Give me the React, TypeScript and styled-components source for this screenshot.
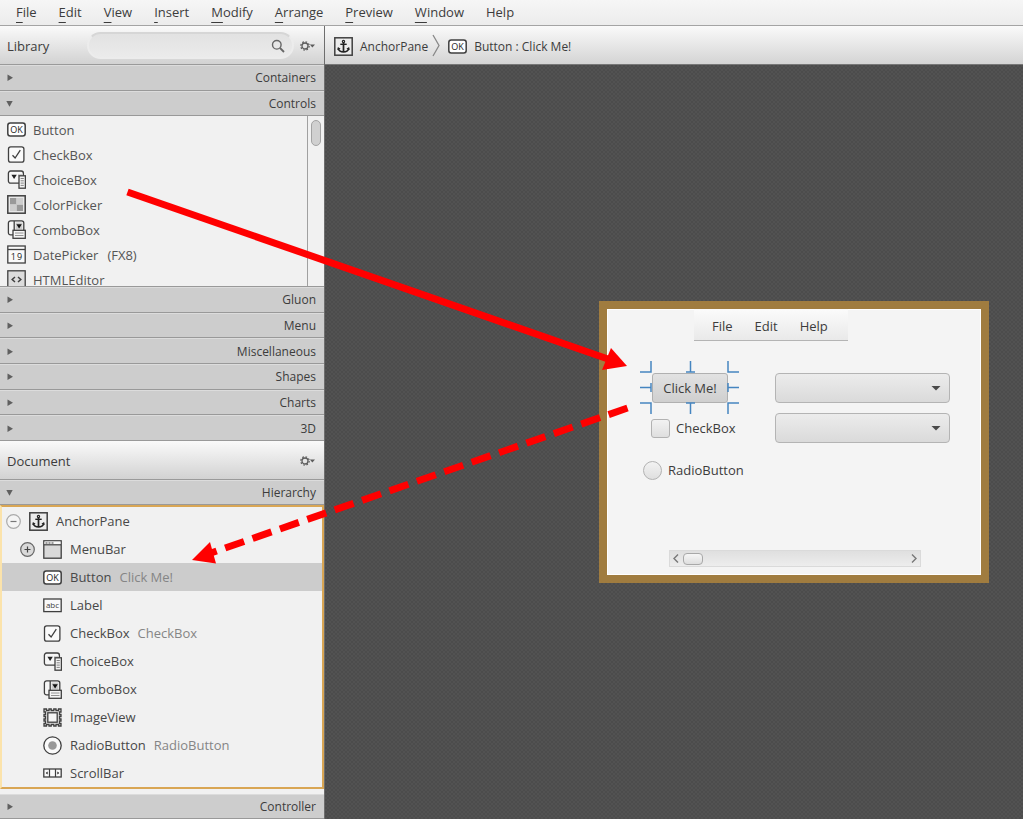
import React from "react";
import styled, { createGlobalStyle } from "styled-components";

const GlobalStyle = createGlobalStyle`
  *, *::before, *::after { box-sizing: border-box; }
  body { margin: 0; }
  body, button, input, select {
    font-family: "Open Sans", "Noto Sans", sans-serif;
    font-size: 13px;
    color: #3c3c3c;
  }
  button { border: 0; padding: 0; background: none; }
  ul { list-style: none; margin: 0; padding: 0; }
`;

const Shell = styled.div`
  position: relative;
  display: flex;
  flex-direction: column;
  min-height: 100vh;
  overflow: hidden;
`;

const MenuBar = styled.nav`
  display: flex;
  align-items: center;
  gap: 22px;
  height: 26px;
  padding: 0 0 2px 16px;
  background: linear-gradient(#f6f6f6, #ececec);
  border-bottom: 1px solid #a4a4a4;
`;

const MenuButton = styled.button`
  line-height: 22px;
`;

const Mnemonic = styled.span`
  text-decoration: underline;
  text-underline-offset: 5px;
  text-decoration-thickness: 1px;
  text-decoration-skip-ink: none;
`;

const Workspace = styled.div`
  flex: 1;
  display: flex;
`;

const Sidebar = styled.aside`
  flex: none;
  width: 325px;
  display: flex;
  flex-direction: column;
  background: #f1f1f1;
  border-right: 1px solid #6e6e6e;
`;

const PanelHeader = styled.header`
  display: flex;
  align-items: center;
  flex: none;
  height: 39px;
  padding: 1px 9px 0 7px;
  background: linear-gradient(#fafafa, #d2d2d2);
  border-bottom: 1px solid #9a9a9a;
`;

const PanelTitle = styled.h2`
  flex: 1;
  margin: 0;
  padding-top: 1px;
  font-size: 13px;
  font-weight: 400;
`;

const SearchBox = styled.label`
  display: flex;
  align-items: center;
  width: 207px;
  height: 27px;
  margin-right: 6px;
  padding: 0 7px 0 12px;
  border: 2px solid #ececec;
  border-top-color: #d6d6d6;
  border-radius: 14px;
  background: linear-gradient(#e2e2e2, #ebebeb);
`;

const SearchInput = styled.input`
  flex: 1;
  min-width: 0;
  border: 0;
  outline: 0;
  background: transparent;
`;

const Accordion = styled.div<{ $height: number }>`
  display: flex;
  flex-direction: column;
  flex: none;
  height: ${(p) => p.$height}px;
`;

const SectionHeader = styled.button`
  flex: 1;
  display: flex;
  align-items: center;
  justify-content: space-between;
  width: 100%;
  min-height: 0;
  padding: 1px 8px 0 6px;
  font-size: 12px;
  line-height: 16px;
  background: #cdcdcd;
  border-top: 1px solid #dcdcdc;
  border-bottom: 1px solid #999;
`;

const ListArea = styled.div`
  display: flex;
  flex: none;
  height: 171px;
  overflow: hidden;
  border-bottom: 1px solid #999;
`;

const ControlList = styled.ul`
  flex: 1;
  padding-top: 1px;
`;

const ControlItem = styled.li`
  display: flex;
  align-items: center;
  gap: 7px;
  height: 25px;
  padding-left: 7px;
  color: #555;
`;

const Note = styled.span`
  margin-left: 2px;
`;

const ScrollTrack = styled.div`
  width: 17px;
  padding: 4px 3px;
  border-left: 1px solid #a0a0a0;
`;

const ScrollThumb = styled.div`
  width: 10px;
  height: 26px;
  border: 1px solid #a3a3a3;
  border-radius: 5px;
  background: #d0d0d0;
`;

const Tree = styled.ul`
  flex: 1;
  border: 2px solid #d9a654;
  border-left-color: #fbe3ab;
`;

const TreeRow = styled.li<{ $level: number; $selected?: boolean }>`
  display: flex;
  align-items: center;
  height: 28px;
  padding-left: ${(p) => 4 + p.$level * 14}px;
  background: ${(p) => (p.$selected ? "#cccccc" : "transparent")};
  color: #484848;
`;

const Toggle = styled.button`
  display: flex;
  width: 15px;
  height: 15px;
`;

const ToggleSlot = styled.span`
  display: flex;
  width: 23px;
`;

const IconSlot = styled.span`
  display: flex;
  width: 27px;
`;

const Detail = styled.span`
  margin-left: 8px;
  color: #858585;
`;

const SidebarFoot = styled.footer`
  display: flex;
  height: 30px;
  padding-top: 5px;
`;

const Main = styled.main`
  flex: 1;
  min-width: 0;
  display: flex;
  flex-direction: column;
`;

const Breadcrumb = styled.nav`
  display: flex;
  align-items: center;
  height: 39px;
  padding: 2px 0 0 9px;
  background: linear-gradient(#fafafa, #d4d4d4);
  border-bottom: 1px solid #777;
`;

const Crumb = styled.button`
  display: flex;
  align-items: center;
  gap: 7px;
  font-size: 12px;
`;

const Canvas = styled.section`
  position: relative;
  flex: 1;
  overflow: hidden;
  background: repeating-conic-gradient(#4c4c4c 0 25%, #525252 0 50%) 0 0 / 4px 4px;
`;

const Artboard = styled.div`
  position: absolute;
  left: 274px;
  top: 236px;
  width: 390px;
  height: 282px;
  border: 8px solid #a07c3f;
  background: #f4f4f4;
  box-shadow: inset 0 0 0 1px #fff;
`;

const Placed = styled.div<{ $x: number; $y: number }>`
  position: absolute;
  left: ${(p) => p.$x}px;
  top: ${(p) => p.$y}px;
`;

const FormMenu = styled.div`
  display: flex;
  align-items: center;
  gap: 22px;
  width: 154px;
  height: 32px;
  padding: 3px 0 0 18px;
  background: linear-gradient(#fbfbfb, #e9e9e9);
  border-bottom: 1px solid #b4b4b4;
`;

const FormButton = styled.button`
  width: 76px;
  height: 30px;
  border: 1px solid #b0b0b0;
  border-radius: 3px;
  background: linear-gradient(#e2e2e2, #cfcfcf);
`;

const FormSelect = styled.select`
  appearance: none;
  display: block;
  width: 175px;
  height: 30px;
  border: 1px solid #b4b4b4;
  border-radius: 4px;
  background: linear-gradient(#ececec, #dadada);
`;

const SelectArrow = styled.svg`
  position: absolute;
  right: 9px;
  top: 12px;
  pointer-events: none;
`;

const FormLabel = styled.label`
  display: flex;
  align-items: center;
  gap: 6px;
  height: 20px;
`;

const FormTick = styled.input<{ $round?: boolean }>`
  appearance: none;
  width: 19px;
  height: 19px;
  margin: 0;
  border: 1px solid #b2b2b2;
  border-radius: ${(p) => (p.$round ? "50%" : "3px")};
  background: linear-gradient(#f2f2f2, #dfdfdf);
`;

const FormScroll = styled.div`
  display: flex;
  align-items: center;
  width: 252px;
  height: 17px;
  padding: 0 3px;
  border: 1px solid #dadada;
  background: linear-gradient(#dfdfdf, #ededed);
`;

const FormThumb = styled.div`
  width: 20px;
  height: 12px;
  margin: 0 auto 0 4px;
  border: 1px solid #a8a8a8;
  border-radius: 4px;
  background: linear-gradient(#f6f6f6, #dedede);
`;

const ArrowButton = styled.button`
  display: flex;
`;

const Annotations = styled.svg`
  position: absolute;
  left: 0;
  top: 0;
  pointer-events: none;
`;

type Kind =
  | "button" | "check" | "choice" | "color" | "combo" | "date" | "html"
  | "anchor" | "menubar" | "label" | "image" | "radio" | "scroll";

const ink = "#3f3f3f";

const drawings: Record<Kind, React.ReactNode> = {
  button: (
    <>
      <rect x=".8" y="3" width="17.4" height="13" rx="2.5" fill="#fff" />
      <text x="9.5" y="12.8" fontSize="9" textAnchor="middle" fill="#222" stroke="none">OK</text>
    </>
  ),
  check: (
    <>
      <rect x="1.5" y="1.8" width="15.4" height="15.4" rx="2.2" fill="#fafafa" strokeWidth="1.3" />
      <path d="M5.5 10.2l2.6 2.8 5.2-7.8" strokeWidth="1.3" />
    </>
  ),
  choice: (
    <>
      <rect x="1.4" y="1" width="15" height="12.2" rx="2.2" fill="#f7f7f7" strokeWidth="1.3" />
      <path d="M4.4 4.8h5.4L7.1 9z" fill="#222" stroke="none" />
      <path d="M11 5h4" stroke="#aaa" strokeWidth="1" />
      <rect x="12" y="5.8" width="6.4" height="12.4" fill="#f3f3f3" strokeWidth="1.3" />
      <path d="M13.6 8.5h3.2M13.6 10.8h3.2M13.6 13.1h3.2M13.6 15.4h3.2" stroke="#777" strokeWidth=".9" />
    </>
  ),
  color: (
    <>
      <rect x=".8" y=".8" width="17.4" height="17.4" fill="#e8e8e8" />
      <path d="M3 3h6.5v6.5H3zM9.5 9.5H16V16H9.500z" fill="#999" stroke="none" />
      <path d="M9.5 3H16v6.5H9.500zM3 9.5h6.5V16H3z" fill="#cdcdcd" stroke="none" />
    </>
  ),
  combo: (
    <>
      <rect x="1.4" y=".9" width="15.4" height="14" rx="2.2" fill="#f7f7f7" strokeWidth="1.3" />
      <path d="M7.2 1v13" strokeWidth="1.3" />
      <path d="M8.6 2.5h6.8v7H8.600z" fill="#ccc" stroke="none" />
      <path d="M9.400 4.300h5.400L12.100 8.500z" fill="#111" stroke="none" />
      <rect x="6" y="10.300" width="12.300" height="8" fill="#f6f6f6" strokeWidth="1.300" />
      <path d="M8 13h8.500M8 15.500h8.500" stroke="#888" strokeWidth=".9" />
    </>
  ),
  date: (
    <>
      <rect x=".8" y="1" width="17.4" height="17" fill="#fafafa" strokeWidth="1.3" />
      <path d="M1 4.500h17" strokeWidth="1.3" />
      <text x="6.300" y="14.500" fontSize="9" textAnchor="middle" fill="#222" stroke="none">1</text>
      <text x="12.500" y="14.500" fontSize="9" textAnchor="middle" fill="#222" stroke="none">9</text>
    </>
  ),
  html: (
    <>
      <rect x=".8" y=".8" width="17.4" height="17.4" fill="#dcdcdc" strokeWidth="1.3" />
      <path d="M8 7L5.200 9.500 8 12M11 7l2.800 2.500L11 12" />
    </>
  ),
  anchor: (
    <>
      <rect x=".8" y=".8" width="17.4" height="17.4" fill="#ececec" />
      <circle cx="9.5" cy="4.500" r="1.100" strokeWidth="1.200" stroke="#222" />
      <path d="M9.500 5.500V15" strokeWidth="1.700" stroke="#222" />
      <path d="M6.300 7.300h6.400" strokeWidth="1.400" stroke="#222" />
      <path d="M4.200 11.500c.8 2.500 2.800 3.400 5.300 3.400s4.500-.9 5.300-3.400" strokeWidth="1.600" stroke="#222" />
      <path d="M3.300 13l.6-3 2.700 1.800zM15.700 13l-.6-3-2.700 1.800z" fill="#222" stroke="none" />
    </>
  ),
  menubar: (
    <>
      <rect x=".8" y=".8" width="17.4" height="17.4" fill="#d9d9d9" strokeWidth="1.3" />
      <path d="M1.500 1.500h16v3h-16z" fill="#f8f8f8" stroke="none" />
      <path d="M1 4.800h17" strokeWidth="1.200" />
      <path d="M2.500 3h8" strokeWidth="1" strokeDasharray="2 1" />
    </>
  ),
  label: (
    <>
      <rect x=".8" y="3" width="17.4" height="12.600" fill="#fafafa" strokeWidth="1.3" />
      <text x="9.500" y="12" fontSize="8" textAnchor="middle" fill={ink} stroke="none">abc</text>
    </>
  ),
  image: (
    <>
      <path
        d="M1 1h2.500v1.500H6V1h2.200v1.500h2.600V1H13v1.500h2.500V1H18v3h-1.500v2.500H18v2h-1.500V11H18v2h-1.500v2.500H18V18h-2.500v-1.500H13V18h-2.200v-1.500H8.200V18H6v-1.500H3.500V18H1v-2.500h1.500V13H1v-2h1.500V8.500H1v-2h1.500V4H1z"
        fill="#e2e2e2"
        strokeWidth="1.3"
      />
      <rect x="4.800" y="4.800" width="9.400" height="9.400" fill="#f4f4f4" strokeWidth="1.3" />
    </>
  ),
  radio: (
    <>
      <circle cx="9.500" cy="9.500" r="8.700" fill="#fafafa" strokeWidth="1.3" />
      <circle cx="9.500" cy="9.500" r="4.300" fill="#999" stroke="none" />
    </>
  ),
  scroll: (
    <>
      <rect x=".8" y="5" width="17.4" height="8" fill="#fafafa" strokeWidth="1.3" />
      <path d="M6.500 5v8M12.500 5v8" strokeWidth="1.2" />
      <path d="M4.600 7.500v3L2.800 9zM14.400 7.500v3L16.200 9z" fill="#111" stroke="none" />
    </>
  ),
};

const Icon = ({ kind }: { kind: Kind }) => (
  <svg width="19" height="19" viewBox="0 0 19 19" fill="none" stroke={ink} strokeWidth="1.5" aria-hidden="true">
    {drawings[kind]}
  </svg>
);

const SearchIcon = () => (
  <svg width="14" height="14" viewBox="0 0 14 14" fill="none" stroke="#666" strokeWidth="1.4" aria-hidden="true">
    <circle cx="5.8" cy="5.8" r="4.3" />
    <path d="M9 9l4 4" strokeWidth="1.8" />
  </svg>
);

const GearButton = ({ label }: { label: string }) => (
  <ArrowButton aria-label={label}>
    <svg width="15" height="12" viewBox="0 0 15 12" aria-hidden="true">
      <circle cx="5" cy="6" r="3" fill="none" stroke="#5c5c5c" strokeWidth="1.3" />
      <circle cx="5" cy="6" r="4.2" fill="none" stroke="#5c5c5c" strokeWidth="1.2" strokeDasharray="1.65 1.65" />
      <path d="M9.800 4.500H15L12.400 7.500z" fill="#5c5c5c" />
    </svg>
  </ArrowButton>
);

const Section = ({ name, open }: { name: string; open?: boolean }) => (
  <SectionHeader aria-expanded={!!open}>
    <svg width="8" height="8" viewBox="0 0 8 8" fill="#606060" aria-hidden="true">
      <path d={open ? "M.3 1h6.400L3.500 6.800z" : "M1.500 .5v6.400L7 3.700z"} />
    </svg>
    {name}
  </SectionHeader>
);

const menus = ["File", "Edit", "View", "Insert", "Modify", "Arrange", "Preview", "Window", "Help"];

const controls: { kind: Kind; name: string; note?: string }[] = [
  { kind: "button", name: "Button" },
  { kind: "check", name: "CheckBox" },
  { kind: "choice", name: "ChoiceBox" },
  { kind: "color", name: "ColorPicker" },
  { kind: "combo", name: "ComboBox" },
  { kind: "date", name: "DatePicker", note: "(FX8)" },
  { kind: "html", name: "HTMLEditor" },
];

const nodes: { kind: Kind; name: string; detail?: string; toggle?: "minus" | "plus" }[] = [
  { kind: "anchor", name: "AnchorPane", toggle: "minus" },
  { kind: "menubar", name: "MenuBar", toggle: "plus" },
  { kind: "button", name: "Button", detail: "Click Me!" },
  { kind: "label", name: "Label" },
  { kind: "check", name: "CheckBox", detail: "CheckBox" },
  { kind: "choice", name: "ChoiceBox" },
  { kind: "combo", name: "ComboBox" },
  { kind: "image", name: "ImageView" },
  { kind: "radio", name: "RadioButton", detail: "RadioButton" },
  { kind: "scroll", name: "ScrollBar" },
];

const TreeToggle = ({ type }: { type: "minus" | "plus" }) => {
  const plus = type === "plus";
  return (
    <Toggle aria-label={plus ? "Expand" : "Collapse"}>
      <svg width="15" height="15" viewBox="0 0 15 15" fill="none" stroke={plus ? "#666" : "#aaa"} aria-hidden="true">
        <circle cx="7.5" cy="7.5" r="6.8" fill={plus ? "#d9d9d9" : "#f4f4f4"} strokeWidth="1.2" />
        <path d={plus ? "M4.5 7.500h6M7.500 4.500v6" : "M4.500 7.500h6"} stroke={plus ? "#444" : "#777"} strokeWidth="1.2" />
      </svg>
    </Toggle>
  );
};

const Dropdown = ({ label }: { label: string }) => (
  <>
    <FormSelect aria-label={label} />
    <SelectArrow width="10" height="6" viewBox="0 0 10 6" fill="#4a4a4a" aria-hidden="true">
      <path d="M.5 1h9L5 5.500z" />
    </SelectArrow>
  </>
);

const Chevron = ({ d, label }: { d: string; label: string }) => (
  <ArrowButton aria-label={label}>
    <svg width="6" height="9" viewBox="0 0 6 9" fill="none" stroke="#777" strokeWidth="1.4" aria-hidden="true">
      <path d={d} />
    </svg>
  </ArrowButton>
);

export default function App() {
  return (
    <Shell>
      <GlobalStyle />
      <MenuBar>
        {menus.map((m) => (
          <MenuButton key={m}>
            {m === "Help" ? m : (
              <>
                <Mnemonic>{m[0]}</Mnemonic>
                {m.slice(1)}
              </>
            )}
          </MenuButton>
        ))}
      </MenuBar>
      <Workspace>
        <Sidebar>
          <PanelHeader>
            <PanelTitle>Library</PanelTitle>
            <SearchBox>
              <SearchInput type="text" aria-label="Search library" />
              <SearchIcon />
            </SearchBox>
            <GearButton label="Library options" />
          </PanelHeader>
          <Accordion $height={51}>
            <Section name="Containers" />
            <Section name="Controls" open />
          </Accordion>
          <ListArea>
            <ControlList>
              {controls.map((c) => (
                <ControlItem key={c.name}>
                  <Icon kind={c.kind} />
                  <span>{c.name}</span>
                  {c.note && <Note>{c.note}</Note>}
                </ControlItem>
              ))}
            </ControlList>
            <ScrollTrack>
              <ScrollThumb />
            </ScrollTrack>
          </ListArea>
          <Accordion $height={154}>
            {["Gluon", "Menu", "Miscellaneous", "Shapes", "Charts", "3D"].map((s) => (
              <Section key={s} name={s} />
            ))}
          </Accordion>
          <PanelHeader>
            <PanelTitle>Document</PanelTitle>
            <GearButton label="Document options" />
          </PanelHeader>
          <Accordion $height={25}>
            <Section name="Hierarchy" open />
          </Accordion>
          <Tree>
            {nodes.map((n, i) => (
              <TreeRow key={n.name} $level={i === 0 ? 0 : 1} $selected={n.name === "Button"}>
                <ToggleSlot>{n.toggle && <TreeToggle type={n.toggle} />}</ToggleSlot>
                <IconSlot>
                  <Icon kind={n.kind} />
                </IconSlot>
                {n.name}
                {n.detail && <Detail>{n.detail}</Detail>}
              </TreeRow>
            ))}
          </Tree>
          <SidebarFoot>
            <Section name="Controller" />
          </SidebarFoot>
        </Sidebar>
        <Main>
          <Breadcrumb>
            <Crumb>
              <Icon kind="anchor" />
              AnchorPane
            </Crumb>
            <svg width="20" height="24" viewBox="0 0 20 24" fill="none" stroke="#888" strokeWidth="1.3" aria-hidden="true">
              <path d="M5 1l6 10.500L5 22" />
            </svg>
            <Crumb>
              <Icon kind="button" />
              Button : Click Me!
            </Crumb>
          </Breadcrumb>
          <Canvas>
            <Artboard>
              <Placed $x={87} $y={0}>
                <FormMenu>
                  <button>File</button>
                  <button>Edit</button>
                  <button>Help</button>
                </FormMenu>
              </Placed>
              <Placed $x={45} $y={64}>
                <FormButton>Click Me!</FormButton>
              </Placed>
              <Placed $x={33} $y={52}>
                <svg width="100" height="53" viewBox="0 0 100 53" fill="none" stroke="#4585c0" strokeWidth="1.5" aria-hidden="true">
                  <path d="M11 0v11H0M88 0v11h11M11 53V42H0M88 53V42h11M50.500 0v11M46 11h9M50.500 53V42M46 42h9M0 26.500h11M11 22v9M99 26.500H88M88 22v9" />
                </svg>
              </Placed>
              <Placed $x={168} $y={64}>
                <Dropdown label="Choice box" />
              </Placed>
              <Placed $x={168} $y={104}>
                <Dropdown label="Combo box" />
              </Placed>
              <Placed $x={44} $y={109}>
                <FormLabel>
                  <FormTick type="checkbox" />
                  CheckBox
                </FormLabel>
              </Placed>
              <Placed $x={36} $y={151}>
                <FormLabel>
                  <FormTick type="radio" $round />
                  RadioButton
                </FormLabel>
              </Placed>
              <Placed $x={62} $y={241}>
                <FormScroll>
                  <Chevron label="Scroll left" d="M5 .5l-4 4 4 4" />
                  <FormThumb />
                  <Chevron label="Scroll right" d="M1 .5l4 4-4 4" />
                </FormScroll>
              </Placed>
            </Artboard>
          </Canvas>
        </Main>
      </Workspace>
      <Annotations width="640" height="580" viewBox="0 0 640 580" aria-hidden="true">
        <path d="M127.500 192L608 359" stroke="#f00" strokeWidth="7" />
        <path d="M627 366L611 348 602 370z" fill="#f00" />
        <path d="M627.500 408L208 554" stroke="#f00" strokeWidth="7" strokeDasharray="20 9" />
        <path d="M192 560L210 542 216 563.500z" fill="#f00" />
      </Annotations>
    </Shell>
  );
}
